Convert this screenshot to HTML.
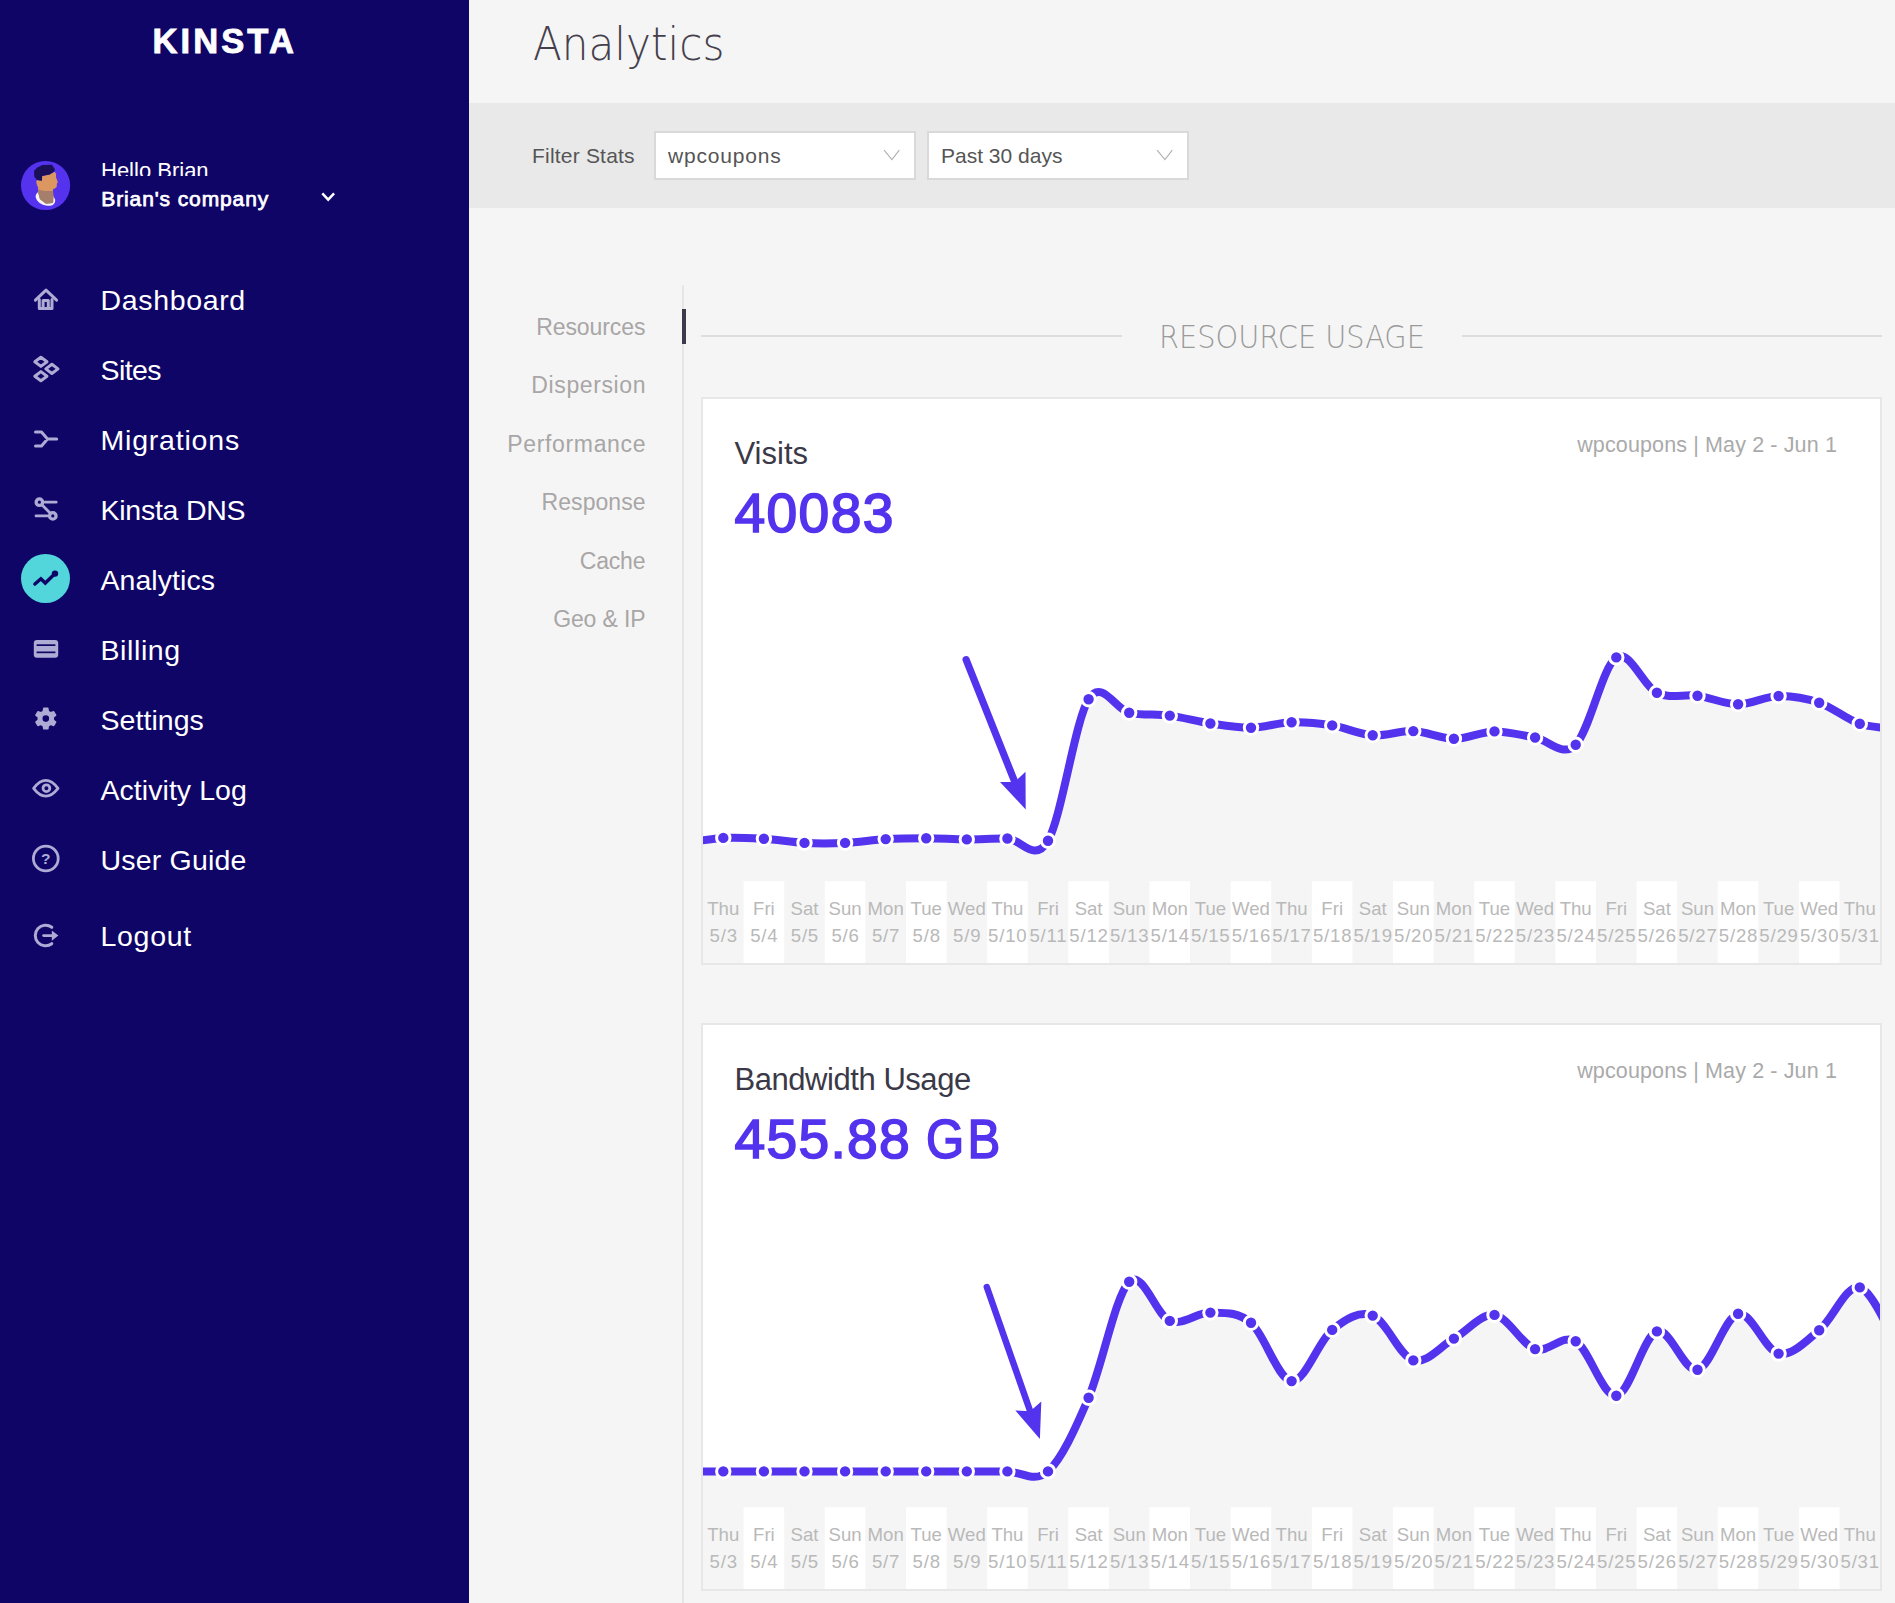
<!DOCTYPE html>
<html lang="en"><head><meta charset="utf-8"><title>Analytics - MyKinsta</title>
<style>
*{box-sizing:border-box;margin:0;padding:0}
html,body{width:1895px;height:1603px;overflow:hidden;background:#f5f5f5;font-family:"Liberation Sans","DejaVu Sans",sans-serif}
.abs{position:absolute;white-space:nowrap}
#side{position:absolute;left:0;top:0;width:469px;height:1603px;background:#0f0566;overflow:hidden}
#logo{position:absolute;left:152.5px;top:19.3px;-webkit-text-stroke:0.9px #fff;font-weight:bold;font-size:34.5px;line-height:44px;color:#fff;letter-spacing:3.1px;white-space:nowrap}
#hello{position:absolute;left:101px;top:155.6px;height:20px;overflow:hidden;font-size:22px;line-height:30px;color:#fff;white-space:nowrap}
#comp{position:absolute;left:101.3px;top:183.5px;font-size:21px;line-height:30px;font-weight:normal;letter-spacing:0.88px;-webkit-text-stroke:0.75px #fff;color:#fff;white-space:nowrap}
.nav{position:absolute;left:100.5px;margin-top:-0.35px;font-size:28.5px;line-height:40px;color:#fff;white-space:nowrap}
#act{position:absolute;left:21px;top:554px;width:49px;height:49px;border-radius:50%;background:#53d5dc}
#main{position:absolute;left:469px;top:0;width:1426px;height:1603px;background:#f5f5f5;overflow:hidden}
#title{position:absolute;left:64px;top:11.5px;font-family:"DejaVu Sans Light","DejaVu Sans","Liberation Sans",sans-serif;font-weight:200;font-size:46px;line-height:64px;color:#453f4c;white-space:nowrap;transform:scaleX(0.916);transform-origin:0 0}
#fbar{position:absolute;left:0;top:103px;width:1426px;height:105px;background:#e9e9e9}
#flabel{position:absolute;left:63px;top:39px;letter-spacing:0.2px;font-size:21px;line-height:28px;color:#555;white-space:nowrap}
.sel{position:absolute;top:28px;width:262px;height:49px;background:#fff;border:2px solid #d9d9d9;font-size:21px;line-height:45px;color:#555;padding-left:12px;white-space:nowrap}
.sel svg{position:absolute;right:13px;top:16px}
.sub{position:absolute;margin-top:-1px;right:1249.5px;font-size:23px;line-height:30px;color:#a8a6a6;white-space:nowrap;text-align:right}
#vline{position:absolute;left:213px;top:285px;width:2px;height:1400px;background:#e6e6e6}
#vact{position:absolute;left:213px;top:309px;width:4px;height:35px;background:#3d3a4b}
#sec{position:absolute;left:233px;top:315.5px;width:1180px;text-align:center;font-family:"DejaVu Sans Light","DejaVu Sans","Liberation Sans",sans-serif;font-weight:200;font-size:32px;line-height:42px;color:#9a9a9a;transform:scaleX(0.9);transform-origin:589.3px 50%;white-space:nowrap}
.hl{position:absolute;top:335px;height:2px;background:#dedede}
.card{position:absolute;left:232px;width:1181px;height:568px;background:#fff;border:2px solid #e7e7e7;overflow:hidden}
.ctitle{position:absolute;left:31.5px;top:34.6px;font-size:31px;line-height:40px;color:#3b3947;white-space:nowrap}
.cval{position:absolute;left:31.5px;top:80.3px;font-size:55.2px;line-height:68px;font-weight:normal;-webkit-text-stroke:1.7px #5333ed;color:#5333ed;white-space:nowrap}
.cmeta{position:absolute;right:43px;top:31px;font-size:21.5px;letter-spacing:0.13px;line-height:30px;color:#aaa;white-space:nowrap}
.chart{position:absolute;left:0;top:0}
.ax text{font-family:"Liberation Sans",sans-serif;font-size:18.6px;fill:#b9b9b9;text-anchor:middle}
#v1{letter-spacing:1.35px}#v2{letter-spacing:1.3px;word-spacing:-2.2px}#v2 span{display:inline-block;transform:scaleX(0.89);transform-origin:0 50%;letter-spacing:3.6px}
.bw{letter-spacing:-0.45px}
.ax text.d{letter-spacing:0.8px}
</style></head><body>
<div id="side">
<div id="logo">KINSTA</div>
<div id="hello">Hello Brian</div>
<div id="comp">Brian's company</div>
<svg class="abs" style="left:320px;top:190px" width="16" height="14" viewBox="0 0 16 14"><path d="M2.3,3.4 L8.2,9.6 L14.1,3.4" fill="none" stroke="#fff" stroke-width="2.5"/></svg>
<div id="act"></div>
<div class="nav" style="top:280px;letter-spacing:0.65px">Dashboard</div>
<div class="nav" style="top:350px;letter-spacing:-0.60px">Sites</div>
<div class="nav" style="top:420px;letter-spacing:0.80px">Migrations</div>
<div class="nav" style="top:490px;letter-spacing:-0.25px">Kinsta DNS</div>
<div class="nav" style="top:560px;letter-spacing:0.05px">Analytics</div>
<div class="nav" style="top:630px;letter-spacing:0.60px">Billing</div>
<div class="nav" style="top:700px;letter-spacing:0.05px">Settings</div>
<div class="nav" style="top:770px;letter-spacing:0.05px">Activity Log</div>
<div class="nav" style="top:840px;letter-spacing:0.20px">User Guide</div>
<div class="nav" style="top:916px;letter-spacing:0.70px">Logout</div>
<svg class="abs" style="left:0;top:0" width="469" height="1000" viewBox="0 0 469 1000">
<g fill="none" stroke="#aeabd4" stroke-width="3" stroke-linecap="round" stroke-linejoin="round">
<path d="M35.4,300.2 L46,290.2 L56.6,300.2"/>
<path d="M39.3,299.5 V308.6 H52 V299.5"/>
<path d="M43.1,308.6 V300.5 H48.3 V308.6" stroke-width="3"/>
<path d="M40.9,357.2 L47.0,361.8 L40.9,366.4 L34.8,361.8 Z M51.9,364.3 L58.0,368.9 L51.9,373.5 L45.8,368.9 Z M40.9,371.6 L47.0,376.2 L40.9,380.8 L34.8,376.2 Z"/>
<path d="M35.5,432 H41.5 L47.5,439 H56.7 M35.5,446 H41.5 L47.5,439"/>
<circle cx="39.4" cy="502.2" r="3.25" stroke-width="3.3"/><circle cx="52.8" cy="515.9" r="3.25" stroke-width="3.3"/>
<path d="M45,502.2 H56.2 M36,515.9 H47.6 M41.9,504.8 L50.3,513.3" stroke-width="2.8"/>
<path d="M33.6,788.3 Q45.8,772.6 58,788.3 Q45.8,804 33.6,788.3 Z" stroke-width="2.8"/>
<circle cx="46.4" cy="788.2" r="3.4" stroke-width="2.8"/>
<circle cx="45.8" cy="858.5" r="12.4" stroke-width="2.8"/>
<path d="M51.8,927.3 A10.3,10.3 0 1,0 51.8,943.7"/>
<path d="M43.6,935.6 H53" stroke-width="2.8"/>
</g>
<g fill="#aeabd4">
<path d="M51.8,930.4 L58.4,935.6 L51.8,940.8 Z"/>
<rect x="33.8" y="640" width="24.4" height="17.7" rx="3"/>
<rect x="36.6" y="644.3" width="18.8" height="1.7" fill="#0e0565"/><rect x="36.6" y="651.5" width="18.8" height="1.7" fill="#0e0565"/>
<path fill-rule="evenodd" stroke="#aeabd4" stroke-width="1.6" stroke-linejoin="round" d="M43.34,711.41 L43.84,708.39 L47.76,708.39 L48.26,711.41 L50.80,712.87 L53.66,711.79 L55.63,715.19 L53.26,717.14 L53.26,720.06 L55.63,722.01 L53.66,725.41 L50.80,724.33 L48.26,725.79 L47.76,728.81 L43.84,728.81 L43.34,725.79 L40.80,724.33 L37.94,725.41 L35.97,722.01 L38.34,720.06 L38.34,717.14 L35.97,715.19 L37.94,711.79 L40.80,712.87 Z M41.70,718.60 a4.10,4.10 0 1,0 8.20,0 a4.10,4.10 0 1,0 -8.20,0 Z"/>
<text x="45.8" y="864.2" text-anchor="middle" font-family="Liberation Sans,sans-serif" font-weight="bold" font-size="15.5">?</text>
</g>
<path d="M34.9,584 L40.9,578.7 L45.3,583 L54.3,574.2" fill="none" stroke="#0e0565" stroke-width="3.4" stroke-linecap="round" stroke-linejoin="miter"/>
<circle cx="55" cy="573.6" r="3.2" fill="#0e0565"/>
</svg>
<svg class="abs" style="left:16px;top:155px" width="60" height="60" viewBox="0 0 1603 1603">
<circle cx="790" cy="815" r="657" fill="#5532ee"/>
<ellipse cx="785" cy="1165" rx="275" ry="175" transform="rotate(22 785 1165)" fill="#f4f4ff"/>
<path d="M690,560 L900,520 L1030,450 L1070,500 L1070,600 L1120,730 L1090,770 L1090,850 L1030,900 L990,910 L990,1000 L1000,1150 L990,1285 L800,1300 L640,1180 L590,1000 L590,870 L560,800 L540,720 L560,670 L690,690 Z" fill="#dc9660"/>
<path d="M990,960 L1000,1150 L990,1285 L800,1300 L640,1180 L590,1000 L590,920 L760,960 Z" fill="#a57f6b"/>
<path d="M700,270 L960,260 L1040,380 L1020,440 L900,520 L700,560 L690,690 L560,670 L490,580 L480,430 L560,340 Z" fill="#1a1058"/>
</svg>
</div>
<div id="main">
<div id="title">Analytics</div>
<div id="fbar">
<div id="flabel">Filter Stats</div>
<div class="sel" style="left:185px;letter-spacing:0.8px">wpcoupons<svg width="20" height="12" viewBox="0 0 20 12"><path d="M3.1,1.1 L10.9,10.6 L18.3,1.1" fill="none" stroke="#b0b0b0" stroke-width="1.1"/></svg></div>
<div class="sel" style="left:458px">Past 30 days<svg width="20" height="12" viewBox="0 0 20 12"><path d="M3.1,1.1 L10.9,10.6 L18.3,1.1" fill="none" stroke="#b0b0b0" stroke-width="1.1"/></svg></div>
</div>
<div id="vline"></div><div id="vact"></div>
<div class="sub" style="top:313.0px;letter-spacing:-0.08px;margin-right:0.08px">Resources</div>
<div class="sub" style="top:371.4px;letter-spacing:0.61px;margin-right:-0.61px">Dispersion</div>
<div class="sub" style="top:429.8px;letter-spacing:0.65px;margin-right:-0.65px">Performance</div>
<div class="sub" style="top:488.2px;letter-spacing:0.05px;margin-right:-0.05px">Response</div>
<div class="sub" style="top:546.6px;letter-spacing:-0.20px;margin-right:0.20px">Cache</div>
<div class="sub" style="top:605.0px;letter-spacing:-0.15px;margin-right:0.15px">Geo &amp; IP</div>
<div class="hl" style="left:232px;width:421px"></div>
<div class="hl" style="left:993px;width:420px"></div>
<div id="sec">RESOURCE USAGE</div>
<div class="card" style="top:397.0px">
<div class="ctitle">Visits</div>
<div class="cval" id="v1">40083</div>
<div class="cmeta">wpcoupons | May 2 - Jun 1</div>
<svg class="chart" width="1177.0" height="564" viewBox="0 0 1177.0 564">
<rect x="40.60" y="482.2" width="40.59" height="81.8" fill="#fff"/>
<rect x="121.77" y="482.2" width="40.59" height="81.8" fill="#fff"/>
<rect x="202.96" y="482.2" width="40.59" height="81.8" fill="#fff"/>
<rect x="284.13" y="482.2" width="40.59" height="81.8" fill="#fff"/>
<rect x="365.32" y="482.2" width="40.59" height="81.8" fill="#fff"/>
<rect x="446.49" y="482.2" width="40.59" height="81.8" fill="#fff"/>
<rect x="527.67" y="482.2" width="40.59" height="81.8" fill="#fff"/>
<rect x="608.86" y="482.2" width="40.59" height="81.8" fill="#fff"/>
<rect x="690.03" y="482.2" width="40.59" height="81.8" fill="#fff"/>
<rect x="771.21" y="482.2" width="40.59" height="81.8" fill="#fff"/>
<rect x="852.39" y="482.2" width="40.59" height="81.8" fill="#fff"/>
<rect x="933.57" y="482.2" width="40.59" height="81.8" fill="#fff"/>
<rect x="1014.76" y="482.2" width="40.59" height="81.8" fill="#fff"/>
<rect x="1095.93" y="482.2" width="40.59" height="81.8" fill="#fff"/>
<path d="M-20.3,444.5C-13.5,443.6 6.8,439.7 20.3,438.9C33.8,438.1 47.4,439.0 60.9,439.8C74.4,440.6 88.0,443.2 101.5,443.9C115.0,444.6 128.5,444.5 142.1,443.9C155.6,443.3 169.1,440.9 182.7,440.1C196.2,439.3 209.7,439.2 223.2,439.2C236.8,439.3 250.3,440.3 263.8,440.4C277.4,440.4 290.9,439.3 304.4,439.5C318.0,439.7 331.5,464.9 345.0,441.7C358.6,418.5 372.1,321.5 385.6,300.2C399.1,278.9 412.7,311.1 426.2,313.8C439.7,316.5 453.3,314.8 466.8,316.6C480.3,318.4 493.9,322.5 507.4,324.5C520.9,326.5 534.4,328.9 548.0,328.7C561.5,328.5 575.0,323.6 588.6,323.2C602.1,322.8 615.6,324.2 629.2,326.4C642.7,328.6 656.2,335.3 669.7,336.3C683.3,337.2 696.8,331.5 710.3,332.1C723.9,332.7 737.4,339.7 750.9,339.8C764.5,339.8 778.0,332.6 791.5,332.4C805.0,332.2 818.6,336.3 832.1,338.5C845.6,340.7 859.2,359.1 872.7,345.8C886.2,332.4 899.8,267.1 913.3,258.4C926.8,249.7 940.3,287.4 953.9,293.8C967.4,300.2 980.9,294.8 994.5,296.7C1008.0,298.6 1021.5,305.2 1035.1,305.3C1048.6,305.3 1062.1,297.3 1075.6,297.0C1089.2,296.7 1102.7,299.1 1116.2,303.7C1129.8,308.3 1143.3,320.4 1156.8,324.8C1170.3,329.2 1190.6,329.1 1197.4,330.0L1197.4,564.0 L-20.3,564.0 Z" fill="#f5f5f5"/>
<g>
<rect x="40.60" y="482.2" width="40.59" height="81.8" fill="#fff"/>
<rect x="121.77" y="482.2" width="40.59" height="81.8" fill="#fff"/>
<rect x="202.96" y="482.2" width="40.59" height="81.8" fill="#fff"/>
<rect x="284.13" y="482.2" width="40.59" height="81.8" fill="#fff"/>
<rect x="365.32" y="482.2" width="40.59" height="81.8" fill="#fff"/>
<rect x="446.49" y="482.2" width="40.59" height="81.8" fill="#fff"/>
<rect x="527.67" y="482.2" width="40.59" height="81.8" fill="#fff"/>
<rect x="608.86" y="482.2" width="40.59" height="81.8" fill="#fff"/>
<rect x="690.03" y="482.2" width="40.59" height="81.8" fill="#fff"/>
<rect x="771.21" y="482.2" width="40.59" height="81.8" fill="#fff"/>
<rect x="852.39" y="482.2" width="40.59" height="81.8" fill="#fff"/>
<rect x="933.57" y="482.2" width="40.59" height="81.8" fill="#fff"/>
<rect x="1014.76" y="482.2" width="40.59" height="81.8" fill="#fff"/>
<rect x="1095.93" y="482.2" width="40.59" height="81.8" fill="#fff"/>
</g>
<path d="M-20.3,444.5C-13.5,443.6 6.8,439.7 20.3,438.9C33.8,438.1 47.4,439.0 60.9,439.8C74.4,440.6 88.0,443.2 101.5,443.9C115.0,444.6 128.5,444.5 142.1,443.9C155.6,443.3 169.1,440.9 182.7,440.1C196.2,439.3 209.7,439.2 223.2,439.2C236.8,439.3 250.3,440.3 263.8,440.4C277.4,440.4 290.9,439.3 304.4,439.5C318.0,439.7 331.5,464.9 345.0,441.7C358.6,418.5 372.1,321.5 385.6,300.2C399.1,278.9 412.7,311.1 426.2,313.8C439.7,316.5 453.3,314.8 466.8,316.6C480.3,318.4 493.9,322.5 507.4,324.5C520.9,326.5 534.4,328.9 548.0,328.7C561.5,328.5 575.0,323.6 588.6,323.2C602.1,322.8 615.6,324.2 629.2,326.4C642.7,328.6 656.2,335.3 669.7,336.3C683.3,337.2 696.8,331.5 710.3,332.1C723.9,332.7 737.4,339.7 750.9,339.8C764.5,339.8 778.0,332.6 791.5,332.4C805.0,332.2 818.6,336.3 832.1,338.5C845.6,340.7 859.2,359.1 872.7,345.8C886.2,332.4 899.8,267.1 913.3,258.4C926.8,249.7 940.3,287.4 953.9,293.8C967.4,300.2 980.9,294.8 994.5,296.7C1008.0,298.6 1021.5,305.2 1035.1,305.3C1048.6,305.3 1062.1,297.3 1075.6,297.0C1089.2,296.7 1102.7,299.1 1116.2,303.7C1129.8,308.3 1143.3,320.4 1156.8,324.8C1170.3,329.2 1190.6,329.1 1197.4,330.0" fill="none" stroke="#5333ed" stroke-width="8" stroke-linecap="butt"/>
<circle cx="20.3" cy="438.9" r="6.7" fill="#5333ed" stroke="#fff" stroke-width="3"/>
<circle cx="60.9" cy="439.8" r="6.7" fill="#5333ed" stroke="#fff" stroke-width="3"/>
<circle cx="101.5" cy="443.9" r="6.7" fill="#5333ed" stroke="#fff" stroke-width="3"/>
<circle cx="142.1" cy="443.9" r="6.7" fill="#5333ed" stroke="#fff" stroke-width="3"/>
<circle cx="182.7" cy="440.1" r="6.7" fill="#5333ed" stroke="#fff" stroke-width="3"/>
<circle cx="223.2" cy="439.2" r="6.7" fill="#5333ed" stroke="#fff" stroke-width="3"/>
<circle cx="263.8" cy="440.4" r="6.7" fill="#5333ed" stroke="#fff" stroke-width="3"/>
<circle cx="304.4" cy="439.5" r="6.7" fill="#5333ed" stroke="#fff" stroke-width="3"/>
<circle cx="345.0" cy="441.7" r="6.7" fill="#5333ed" stroke="#fff" stroke-width="3"/>
<circle cx="385.6" cy="300.2" r="6.7" fill="#5333ed" stroke="#fff" stroke-width="3"/>
<circle cx="426.2" cy="313.8" r="6.7" fill="#5333ed" stroke="#fff" stroke-width="3"/>
<circle cx="466.8" cy="316.6" r="6.7" fill="#5333ed" stroke="#fff" stroke-width="3"/>
<circle cx="507.4" cy="324.5" r="6.7" fill="#5333ed" stroke="#fff" stroke-width="3"/>
<circle cx="548.0" cy="328.7" r="6.7" fill="#5333ed" stroke="#fff" stroke-width="3"/>
<circle cx="588.6" cy="323.2" r="6.7" fill="#5333ed" stroke="#fff" stroke-width="3"/>
<circle cx="629.2" cy="326.4" r="6.7" fill="#5333ed" stroke="#fff" stroke-width="3"/>
<circle cx="669.7" cy="336.3" r="6.7" fill="#5333ed" stroke="#fff" stroke-width="3"/>
<circle cx="710.3" cy="332.1" r="6.7" fill="#5333ed" stroke="#fff" stroke-width="3"/>
<circle cx="750.9" cy="339.8" r="6.7" fill="#5333ed" stroke="#fff" stroke-width="3"/>
<circle cx="791.5" cy="332.4" r="6.7" fill="#5333ed" stroke="#fff" stroke-width="3"/>
<circle cx="832.1" cy="338.5" r="6.7" fill="#5333ed" stroke="#fff" stroke-width="3"/>
<circle cx="872.7" cy="345.8" r="6.7" fill="#5333ed" stroke="#fff" stroke-width="3"/>
<circle cx="913.3" cy="258.4" r="6.7" fill="#5333ed" stroke="#fff" stroke-width="3"/>
<circle cx="953.9" cy="293.8" r="6.7" fill="#5333ed" stroke="#fff" stroke-width="3"/>
<circle cx="994.5" cy="296.7" r="6.7" fill="#5333ed" stroke="#fff" stroke-width="3"/>
<circle cx="1035.1" cy="305.3" r="6.7" fill="#5333ed" stroke="#fff" stroke-width="3"/>
<circle cx="1075.6" cy="297.0" r="6.7" fill="#5333ed" stroke="#fff" stroke-width="3"/>
<circle cx="1116.2" cy="303.7" r="6.7" fill="#5333ed" stroke="#fff" stroke-width="3"/>
<circle cx="1156.8" cy="324.8" r="6.7" fill="#5333ed" stroke="#fff" stroke-width="3"/>
<g class="ax">
<text x="20.3" y="515.6">Thu</text><text class="d" x="20.7" y="542.8">5/3</text>
<text x="60.9" y="515.6">Fri</text><text class="d" x="61.3" y="542.8">5/4</text>
<text x="101.5" y="515.6">Sat</text><text class="d" x="101.9" y="542.8">5/5</text>
<text x="142.1" y="515.6">Sun</text><text class="d" x="142.5" y="542.8">5/6</text>
<text x="182.7" y="515.6">Mon</text><text class="d" x="183.1" y="542.8">5/7</text>
<text x="223.2" y="515.6">Tue</text><text class="d" x="223.7" y="542.8">5/8</text>
<text x="263.8" y="515.6">Wed</text><text class="d" x="264.2" y="542.8">5/9</text>
<text x="304.4" y="515.6">Thu</text><text class="d" x="304.8" y="542.8">5/10</text>
<text x="345.0" y="515.6">Fri</text><text class="d" x="345.4" y="542.8">5/11</text>
<text x="385.6" y="515.6">Sat</text><text class="d" x="386.0" y="542.8">5/12</text>
<text x="426.2" y="515.6">Sun</text><text class="d" x="426.6" y="542.8">5/13</text>
<text x="466.8" y="515.6">Mon</text><text class="d" x="467.2" y="542.8">5/14</text>
<text x="507.4" y="515.6">Tue</text><text class="d" x="507.8" y="542.8">5/15</text>
<text x="548.0" y="515.6">Wed</text><text class="d" x="548.4" y="542.8">5/16</text>
<text x="588.6" y="515.6">Thu</text><text class="d" x="589.0" y="542.8">5/17</text>
<text x="629.2" y="515.6">Fri</text><text class="d" x="629.6" y="542.8">5/18</text>
<text x="669.7" y="515.6">Sat</text><text class="d" x="670.1" y="542.8">5/19</text>
<text x="710.3" y="515.6">Sun</text><text class="d" x="710.7" y="542.8">5/20</text>
<text x="750.9" y="515.6">Mon</text><text class="d" x="751.3" y="542.8">5/21</text>
<text x="791.5" y="515.6">Tue</text><text class="d" x="791.9" y="542.8">5/22</text>
<text x="832.1" y="515.6">Wed</text><text class="d" x="832.5" y="542.8">5/23</text>
<text x="872.7" y="515.6">Thu</text><text class="d" x="873.1" y="542.8">5/24</text>
<text x="913.3" y="515.6">Fri</text><text class="d" x="913.7" y="542.8">5/25</text>
<text x="953.9" y="515.6">Sat</text><text class="d" x="954.3" y="542.8">5/26</text>
<text x="994.5" y="515.6">Sun</text><text class="d" x="994.9" y="542.8">5/27</text>
<text x="1035.1" y="515.6">Mon</text><text class="d" x="1035.5" y="542.8">5/28</text>
<text x="1075.6" y="515.6">Tue</text><text class="d" x="1076.0" y="542.8">5/29</text>
<text x="1116.2" y="515.6">Wed</text><text class="d" x="1116.6" y="542.8">5/30</text>
<text x="1156.8" y="515.6">Thu</text><text class="d" x="1157.2" y="542.8">5/31</text>
</g>
<path d="M263.1,260.6 L311.8,383.0" stroke="#5333ed" stroke-width="7.2" stroke-linecap="round" fill="none"/>
<path d="M322.7,410.4 L297.0,382.9 L311.8,383.0 L322.5,372.8 Z" fill="#5333ed"/>
</svg>
</div>
<div class="card" style="top:1023.0px">
<div class="ctitle bw">Bandwidth Usage</div>
<div class="cval" id="v2">455.88 <span>GB</span></div>
<div class="cmeta">wpcoupons | May 2 - Jun 1</div>
<svg class="chart" width="1177.0" height="564" viewBox="0 0 1177.0 564">
<rect x="40.60" y="482.2" width="40.59" height="81.8" fill="#fff"/>
<rect x="121.77" y="482.2" width="40.59" height="81.8" fill="#fff"/>
<rect x="202.96" y="482.2" width="40.59" height="81.8" fill="#fff"/>
<rect x="284.13" y="482.2" width="40.59" height="81.8" fill="#fff"/>
<rect x="365.32" y="482.2" width="40.59" height="81.8" fill="#fff"/>
<rect x="446.49" y="482.2" width="40.59" height="81.8" fill="#fff"/>
<rect x="527.67" y="482.2" width="40.59" height="81.8" fill="#fff"/>
<rect x="608.86" y="482.2" width="40.59" height="81.8" fill="#fff"/>
<rect x="690.03" y="482.2" width="40.59" height="81.8" fill="#fff"/>
<rect x="771.21" y="482.2" width="40.59" height="81.8" fill="#fff"/>
<rect x="852.39" y="482.2" width="40.59" height="81.8" fill="#fff"/>
<rect x="933.57" y="482.2" width="40.59" height="81.8" fill="#fff"/>
<rect x="1014.76" y="482.2" width="40.59" height="81.8" fill="#fff"/>
<rect x="1095.93" y="482.2" width="40.59" height="81.8" fill="#fff"/>
<path d="M-20.3,446.4C-13.5,446.4 6.8,446.4 20.3,446.4C33.8,446.4 47.4,446.4 60.9,446.4C74.4,446.4 88.0,446.4 101.5,446.4C115.0,446.4 128.5,446.4 142.1,446.4C155.6,446.4 169.1,446.4 182.7,446.4C196.2,446.4 209.7,446.4 223.2,446.4C236.8,446.4 250.3,446.4 263.8,446.4C277.4,446.4 290.9,446.4 304.4,446.4C318.0,446.4 331.5,458.7 345.0,446.4C358.6,434.1 372.1,404.3 385.6,372.7C399.1,341.1 412.7,269.6 426.2,256.8C439.7,244.0 453.3,290.8 466.8,295.9C480.3,301.0 493.9,287.3 507.4,287.6C520.9,287.9 534.4,286.4 548.0,297.8C561.5,309.2 575.0,354.9 588.6,356.1C602.1,357.3 615.6,315.8 629.2,304.9C642.7,294.0 656.2,285.5 669.7,290.6C683.3,295.7 696.8,331.6 710.3,335.4C723.9,339.2 737.4,321.2 750.9,313.6C764.5,306.0 778.0,288.2 791.5,289.9C805.0,291.7 818.6,319.7 832.1,324.1C845.6,328.5 859.2,308.4 872.7,316.2C886.2,324.0 899.8,372.4 913.3,370.8C926.8,369.2 940.3,310.7 953.9,306.4C967.4,302.1 980.9,347.7 994.5,344.8C1008.0,341.9 1021.5,291.5 1035.1,288.8C1048.6,286.1 1062.1,325.8 1075.6,328.6C1089.2,331.3 1102.7,316.3 1116.2,305.3C1129.8,294.3 1143.3,258.8 1156.8,262.4C1170.3,266.0 1190.6,316.2 1197.4,327.0L1197.4,564.0 L-20.3,564.0 Z" fill="#f5f5f5"/>
<g>
<rect x="40.60" y="482.2" width="40.59" height="81.8" fill="#fff"/>
<rect x="121.77" y="482.2" width="40.59" height="81.8" fill="#fff"/>
<rect x="202.96" y="482.2" width="40.59" height="81.8" fill="#fff"/>
<rect x="284.13" y="482.2" width="40.59" height="81.8" fill="#fff"/>
<rect x="365.32" y="482.2" width="40.59" height="81.8" fill="#fff"/>
<rect x="446.49" y="482.2" width="40.59" height="81.8" fill="#fff"/>
<rect x="527.67" y="482.2" width="40.59" height="81.8" fill="#fff"/>
<rect x="608.86" y="482.2" width="40.59" height="81.8" fill="#fff"/>
<rect x="690.03" y="482.2" width="40.59" height="81.8" fill="#fff"/>
<rect x="771.21" y="482.2" width="40.59" height="81.8" fill="#fff"/>
<rect x="852.39" y="482.2" width="40.59" height="81.8" fill="#fff"/>
<rect x="933.57" y="482.2" width="40.59" height="81.8" fill="#fff"/>
<rect x="1014.76" y="482.2" width="40.59" height="81.8" fill="#fff"/>
<rect x="1095.93" y="482.2" width="40.59" height="81.8" fill="#fff"/>
</g>
<path d="M-20.3,446.4C-13.5,446.4 6.8,446.4 20.3,446.4C33.8,446.4 47.4,446.4 60.9,446.4C74.4,446.4 88.0,446.4 101.5,446.4C115.0,446.4 128.5,446.4 142.1,446.4C155.6,446.4 169.1,446.4 182.7,446.4C196.2,446.4 209.7,446.4 223.2,446.4C236.8,446.4 250.3,446.4 263.8,446.4C277.4,446.4 290.9,446.4 304.4,446.4C318.0,446.4 331.5,458.7 345.0,446.4C358.6,434.1 372.1,404.3 385.6,372.7C399.1,341.1 412.7,269.6 426.2,256.8C439.7,244.0 453.3,290.8 466.8,295.9C480.3,301.0 493.9,287.3 507.4,287.6C520.9,287.9 534.4,286.4 548.0,297.8C561.5,309.2 575.0,354.9 588.6,356.1C602.1,357.3 615.6,315.8 629.2,304.9C642.7,294.0 656.2,285.5 669.7,290.6C683.3,295.7 696.8,331.6 710.3,335.4C723.9,339.2 737.4,321.2 750.9,313.6C764.5,306.0 778.0,288.2 791.5,289.9C805.0,291.7 818.6,319.7 832.1,324.1C845.6,328.5 859.2,308.4 872.7,316.2C886.2,324.0 899.8,372.4 913.3,370.8C926.8,369.2 940.3,310.7 953.9,306.4C967.4,302.1 980.9,347.7 994.5,344.8C1008.0,341.9 1021.5,291.5 1035.1,288.8C1048.6,286.1 1062.1,325.8 1075.6,328.6C1089.2,331.3 1102.7,316.3 1116.2,305.3C1129.8,294.3 1143.3,258.8 1156.8,262.4C1170.3,266.0 1190.6,316.2 1197.4,327.0" fill="none" stroke="#5333ed" stroke-width="8" stroke-linecap="butt"/>
<circle cx="20.3" cy="446.4" r="6.7" fill="#5333ed" stroke="#fff" stroke-width="3"/>
<circle cx="60.9" cy="446.4" r="6.7" fill="#5333ed" stroke="#fff" stroke-width="3"/>
<circle cx="101.5" cy="446.4" r="6.7" fill="#5333ed" stroke="#fff" stroke-width="3"/>
<circle cx="142.1" cy="446.4" r="6.7" fill="#5333ed" stroke="#fff" stroke-width="3"/>
<circle cx="182.7" cy="446.4" r="6.7" fill="#5333ed" stroke="#fff" stroke-width="3"/>
<circle cx="223.2" cy="446.4" r="6.7" fill="#5333ed" stroke="#fff" stroke-width="3"/>
<circle cx="263.8" cy="446.4" r="6.7" fill="#5333ed" stroke="#fff" stroke-width="3"/>
<circle cx="304.4" cy="446.4" r="6.7" fill="#5333ed" stroke="#fff" stroke-width="3"/>
<circle cx="345.0" cy="446.4" r="6.7" fill="#5333ed" stroke="#fff" stroke-width="3"/>
<circle cx="385.6" cy="372.7" r="6.7" fill="#5333ed" stroke="#fff" stroke-width="3"/>
<circle cx="426.2" cy="256.8" r="6.7" fill="#5333ed" stroke="#fff" stroke-width="3"/>
<circle cx="466.8" cy="295.9" r="6.7" fill="#5333ed" stroke="#fff" stroke-width="3"/>
<circle cx="507.4" cy="287.6" r="6.7" fill="#5333ed" stroke="#fff" stroke-width="3"/>
<circle cx="548.0" cy="297.8" r="6.7" fill="#5333ed" stroke="#fff" stroke-width="3"/>
<circle cx="588.6" cy="356.1" r="6.7" fill="#5333ed" stroke="#fff" stroke-width="3"/>
<circle cx="629.2" cy="304.9" r="6.7" fill="#5333ed" stroke="#fff" stroke-width="3"/>
<circle cx="669.7" cy="290.6" r="6.7" fill="#5333ed" stroke="#fff" stroke-width="3"/>
<circle cx="710.3" cy="335.4" r="6.7" fill="#5333ed" stroke="#fff" stroke-width="3"/>
<circle cx="750.9" cy="313.6" r="6.7" fill="#5333ed" stroke="#fff" stroke-width="3"/>
<circle cx="791.5" cy="289.9" r="6.7" fill="#5333ed" stroke="#fff" stroke-width="3"/>
<circle cx="832.1" cy="324.1" r="6.7" fill="#5333ed" stroke="#fff" stroke-width="3"/>
<circle cx="872.7" cy="316.2" r="6.7" fill="#5333ed" stroke="#fff" stroke-width="3"/>
<circle cx="913.3" cy="370.8" r="6.7" fill="#5333ed" stroke="#fff" stroke-width="3"/>
<circle cx="953.9" cy="306.4" r="6.7" fill="#5333ed" stroke="#fff" stroke-width="3"/>
<circle cx="994.5" cy="344.8" r="6.7" fill="#5333ed" stroke="#fff" stroke-width="3"/>
<circle cx="1035.1" cy="288.8" r="6.7" fill="#5333ed" stroke="#fff" stroke-width="3"/>
<circle cx="1075.6" cy="328.6" r="6.7" fill="#5333ed" stroke="#fff" stroke-width="3"/>
<circle cx="1116.2" cy="305.3" r="6.7" fill="#5333ed" stroke="#fff" stroke-width="3"/>
<circle cx="1156.8" cy="262.4" r="6.7" fill="#5333ed" stroke="#fff" stroke-width="3"/>
<g class="ax">
<text x="20.3" y="515.6">Thu</text><text class="d" x="20.7" y="542.8">5/3</text>
<text x="60.9" y="515.6">Fri</text><text class="d" x="61.3" y="542.8">5/4</text>
<text x="101.5" y="515.6">Sat</text><text class="d" x="101.9" y="542.8">5/5</text>
<text x="142.1" y="515.6">Sun</text><text class="d" x="142.5" y="542.8">5/6</text>
<text x="182.7" y="515.6">Mon</text><text class="d" x="183.1" y="542.8">5/7</text>
<text x="223.2" y="515.6">Tue</text><text class="d" x="223.7" y="542.8">5/8</text>
<text x="263.8" y="515.6">Wed</text><text class="d" x="264.2" y="542.8">5/9</text>
<text x="304.4" y="515.6">Thu</text><text class="d" x="304.8" y="542.8">5/10</text>
<text x="345.0" y="515.6">Fri</text><text class="d" x="345.4" y="542.8">5/11</text>
<text x="385.6" y="515.6">Sat</text><text class="d" x="386.0" y="542.8">5/12</text>
<text x="426.2" y="515.6">Sun</text><text class="d" x="426.6" y="542.8">5/13</text>
<text x="466.8" y="515.6">Mon</text><text class="d" x="467.2" y="542.8">5/14</text>
<text x="507.4" y="515.6">Tue</text><text class="d" x="507.8" y="542.8">5/15</text>
<text x="548.0" y="515.6">Wed</text><text class="d" x="548.4" y="542.8">5/16</text>
<text x="588.6" y="515.6">Thu</text><text class="d" x="589.0" y="542.8">5/17</text>
<text x="629.2" y="515.6">Fri</text><text class="d" x="629.6" y="542.8">5/18</text>
<text x="669.7" y="515.6">Sat</text><text class="d" x="670.1" y="542.8">5/19</text>
<text x="710.3" y="515.6">Sun</text><text class="d" x="710.7" y="542.8">5/20</text>
<text x="750.9" y="515.6">Mon</text><text class="d" x="751.3" y="542.8">5/21</text>
<text x="791.5" y="515.6">Tue</text><text class="d" x="791.9" y="542.8">5/22</text>
<text x="832.1" y="515.6">Wed</text><text class="d" x="832.5" y="542.8">5/23</text>
<text x="872.7" y="515.6">Thu</text><text class="d" x="873.1" y="542.8">5/24</text>
<text x="913.3" y="515.6">Fri</text><text class="d" x="913.7" y="542.8">5/25</text>
<text x="953.9" y="515.6">Sat</text><text class="d" x="954.3" y="542.8">5/26</text>
<text x="994.5" y="515.6">Sun</text><text class="d" x="994.9" y="542.8">5/27</text>
<text x="1035.1" y="515.6">Mon</text><text class="d" x="1035.5" y="542.8">5/28</text>
<text x="1075.6" y="515.6">Tue</text><text class="d" x="1076.0" y="542.8">5/29</text>
<text x="1116.2" y="515.6">Wed</text><text class="d" x="1116.6" y="542.8">5/30</text>
<text x="1156.8" y="515.6">Thu</text><text class="d" x="1157.2" y="542.8">5/31</text>
</g>
<path d="M283.8,262.0 L327.2,386.2" stroke="#5333ed" stroke-width="6.5" stroke-linecap="round" fill="none"/>
<path d="M336.9,414.0 L312.4,385.5 L327.2,386.2 L338.3,376.4 Z" fill="#5333ed"/>
</svg>
</div>
</div>
</body></html>
